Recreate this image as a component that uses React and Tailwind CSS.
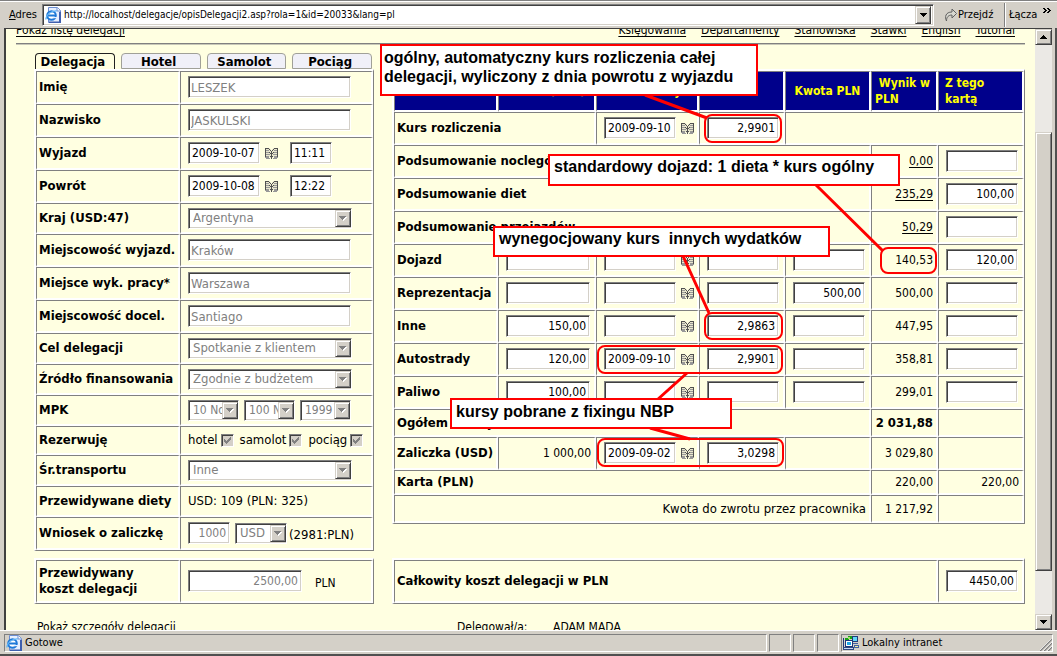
import React from "react";

const UI = "font-['DejaVu_Sans_Condensed','DejaVu_Sans',sans-serif]";
const CELL =
  "border-t border-l border-t-[#808080] border-l-[#808080] border-r-2 border-b-2 border-r-white border-b-white p-0 align-middle";
const TABLE =
  "w-full table-fixed border-separate border-spacing-0 border-t-2 border-l-2 border-t-white border-l-white border-r border-b border-r-[#808080] border-b-[#808080]";
const SUNKEN =
  "rounded-none border border-t-[#808080] border-l-[#808080] border-r-white border-b-white bg-white shadow-[inset_1px_1px_#404040,inset_-1px_-1px_#d4d0c8]";
const RAISED =
  "border border-t-[#d4d0c8] border-l-[#d4d0c8] border-r-[#404040] border-b-[#404040] bg-[#d4d0c8] shadow-[inset_1px_1px_#ffffff,inset_-1px_-1px_#808080]";

function Field({ id, label, value = "", width = "w-[72px]", right, disabled }) {
  const size = disabled && !right ? "px-[2px] text-[13px]" : "px-[3px] text-[12px]";
  return (
    <input
      id={id}
      type="text"
      aria-label={label}
      defaultValue={value}
      disabled={disabled}
      className={`${SUNKEN} ${width} ${size} block h-[22px] shrink-0 ${
        right ? "text-right" : "text-left"
      } ${disabled ? "text-[#808080]" : "text-black"}`}
    />
  );
}

function Pick({ id, label, value, width = "w-[164px]", size = "text-[13px]" }) {
  return (
    <span className={`relative block h-[21px] shrink-0 ${width}`}>
      <select
        id={id}
        aria-label={label}
        disabled
        className={`${SUNKEN} ${size} block h-[21px] w-full appearance-none overflow-hidden pr-[16px] pl-[4px] text-[#808080] opacity-100`}
      >
        <option>{value}</option>
      </select>
      <span
        className={`${RAISED} pointer-events-none absolute top-[2px] right-px flex h-[17px] w-[16px] items-center justify-center`}
      >
        <svg width="8" height="5" viewBox="0 0 8 5" shapeRendering="crispEdges">
          <path d="M1 1h7v1h-1v1h-1v1h-1v1h-1V4h-1z" fill="#fff" />
          <path d="M0 0h7v1H6v1H5v1H4v1H3V3H2V2H1V1H0z" fill="#808080" />
        </svg>
      </span>
    </span>
  );
}

function Book() {
  return (
    <button type="button" aria-label="Kalendarz" className="block h-[13px] w-[13px] shrink-0">
      <svg width="13" height="13" viewBox="0 0 13 13" shapeRendering="crispEdges">
        <path d="M1 1h4v1h1v9H5v-1H1zM12 1H8v1H7v9h1v-1h4z" fill="#e8e6cc" />
        <path
          d="M0 1h1v9H0zM12 1h1v9h-1zM1 1h3v1H1zM9 1h3v1H9zM4 2h1v1H4zM8 2h1v1H8zM5 3h1v1H5zM7 3h1v1H7zM6 4h1v8H6zM4 5h1v1H4zM8 5h1v1H8zM5 6h1v1H5zM7 6h1v1H7zM5 9h1v1H5zM7 9h1v1H7z"
          fill="#505050"
        />
        <path
          d="M1 3h3v1H1zM9 3h3v1H9zM1 5h3v1H1zM9 5h3v1H9zM1 7h4v1H1zM8 7h4v1H8zM1 9h3v1H1zM9 9h3v1H9zM0 10h4v1H0zM9 10h4v1H9zM1 11h4v1H1zM8 11h4v1H8z"
          fill="#989898"
        />
      </svg>
    </button>
  );
}

function Check({ label }) {
  const id = `rez-${label}`;
  return (
    <span className="flex items-center gap-[3px]">
      <label htmlFor={id}>{label}</label>
      <span className="relative block h-[13px] w-[13px]">
        <input
          id={id}
          type="checkbox"
          defaultChecked
          disabled
          className="block h-[13px] w-[13px] appearance-none border border-t-[#808080] border-l-[#808080] border-r-white border-b-white bg-[#d4d0c8] shadow-[inset_1px_1px_#404040]"
        />
        <svg
          className="pointer-events-none absolute top-[3px] left-[3px]"
          width="7"
          height="7"
          viewBox="0 0 7 7"
          shapeRendering="crispEdges"
        >
          <path d="M0 2h1v1h1v1h1V3h1V2h1V1h1V0h1v3H6v1H5v1H4v1H3v1H2V6H1V5H0z" fill="#808080" />
        </svg>
      </span>
    </span>
  );
}

function Row({ label, id, h = "h-[33px]", children }) {
  return (
    <tr className={h}>
      <th scope="row" className={`${CELL} pl-[2px] text-left font-bold`}>
        {id ? <label htmlFor={id}>{label}</label> : label}
      </th>
      <td className={CELL}>
        <div className="flex items-center gap-[5px] pl-[7px]">{children}</div>
      </td>
    </tr>
  );
}

const TABS = ["Delegacja", "Hotel", "Samolot", "Pociąg"];

function Tabs() {
  return (
    <div role="tablist" className="flex h-4 gap-[6px] pr-[2px] pl-px">
      {TABS.map((t, i) => (
        <button
          key={t}
          type="button"
          role="tab"
          aria-selected={i === 0}
          className={`h-4 flex-1 rounded-t-[4px] border-x border-t pr-1 text-[13px] leading-[15px] font-bold ${
            i === 0
              ? "border-[#202020] bg-[#ffffe1]"
              : "border-b border-[#a0a098] bg-[#f0f0f8]"
          }`}
        >
          {t}
        </button>
      ))}
    </div>
  );
}

function TripForm() {
  return (
    <table className={TABLE}>
      <colgroup>
        <col className="w-[144px]" />
        <col />
      </colgroup>
      <tbody>
        <Row label="Imię" id="imie">
          <Field id="imie" value="LESZEK" width="w-[163px]" disabled />
        </Row>
        <Row label="Nazwisko" id="nazwisko">
          <Field id="nazwisko" value="JASKULSKI" width="w-[163px]" disabled />
        </Row>
        <Row label="Wyjazd" id="wyjazd">
          <Field id="wyjazd" value="2009-10-07" />
          <Book />
          <span className="w-[2px]" />
          <Field label="Godzina wyjazdu" value="11:11" width="w-[42px]" />
        </Row>
        <Row label="Powrót" id="powrot">
          <Field id="powrot" value="2009-10-08" />
          <Book />
          <span className="w-[2px]" />
          <Field label="Godzina powrotu" value="12:22" width="w-[42px]" />
        </Row>
        <Row label="Kraj (USD:47)" id="kraj" h="h-[31px]">
          <Pick id="kraj" value="Argentyna" />
        </Row>
        <Row label="Miejscowość wyjazd." id="mwyj">
          <Field id="mwyj" value="Kraków" width="w-[163px]" disabled />
        </Row>
        <Row label="Miejsce wyk. pracy*" id="mprac">
          <Field id="mprac" value="Warszawa" width="w-[163px]" disabled />
        </Row>
        <Row label="Miejscowość docel." id="mdoc">
          <Field id="mdoc" value="Santiago" width="w-[163px]" disabled />
        </Row>
        <Row label="Cel delegacji" id="cel" h="h-[31px]">
          <Pick id="cel" value="Spotkanie z klientem" />
        </Row>
        <Row label="Źródło finansowania" id="zrodlo" h="h-[31px]">
          <Pick id="zrodlo" value="Zgodnie z budżetem" />
        </Row>
        <Row label="MPK" id="mpk" h="h-[31px]">
          <Pick id="mpk" value="10 Nowy" width="w-[51px]" size="text-[12px]" />
          <Pick label="MPK 2" value="100 Nowy" width="w-[51px]" size="text-[12px]" />
          <Pick label="MPK 3" value="1999" width="w-[51px]" size="text-[12px]" />
        </Row>
        <Row label="Rezerwuję" h="h-[29px]">
          <span className="flex gap-[6px]">
            <Check label="hotel" />
            <Check label="samolot" />
            <Check label="pociąg" />
          </span>
        </Row>
        <Row label="Śr.transportu" id="transport" h="h-[31px]">
          <Pick id="transport" value="Inne" />
        </Row>
        <Row label="Przewidywane diety" h="h-[31px]">
          <span>USD: 109 (PLN: 325)</span>
        </Row>
        <Row label="Wniosek o zaliczkę" id="zaliczka">
          <Field id="zaliczka" value="1000" width="w-[42px]" right disabled />
          <Pick label="Waluta zaliczki" value="USD" width="w-[52px]" />
          <span className="-ml-[3px] pt-1">(2981:PLN)</span>
        </Row>
      </tbody>
    </table>
  );
}

function DateCell({ label, value }) {
  return (
    <td className={CELL}>
      <div className="flex items-center gap-[5px] pl-[7px]">
        <Field label={`Data kursu – ${label}`} value={value} />
        <Book />
      </div>
    </td>
  );
}

function NumCell({ label, value, width }) {
  return (
    <td className={`${CELL} pl-[7px]`}>
      <Field label={label} value={value} width={width} right />
    </td>
  );
}

function Value({ children, className = "text-[12px]" }) {
  return <td className={`${CELL} pr-[3px] text-right ${className}`}>{children}</td>;
}

function Name({ children, span }) {
  return (
    <th scope="row" colSpan={span} className={`${CELL} pl-[2px] text-left font-bold`}>
      {children}
    </th>
  );
}

const SUMMARY = [
  ["Podsumowanie noclegów", "0,00", ""],
  ["Podsumowanie diet", "235,29", "100,00"],
  ["Podsumowanie przejazdów", "50,29", ""],
];

const COSTS = [
  { name: "Dojazd", total: "140,53", card: "120,00" },
  { name: "Reprezentacja", pln: "500,00", total: "500,00" },
  { name: "Inne", amount: "150,00", rate: "2,9863", total: "447,95" },
  { name: "Autostrady", amount: "120,00", date: "2009-09-10", rate: "2,9901", total: "358,81" },
  { name: "Paliwo", amount: "100,00", total: "299,01" },
];

const HEAD = `${CELL} bg-[#00008b] text-[#ffff00] text-[12px] font-bold leading-4`;

function Settlement() {
  return (
    <table className={TABLE}>
      <colgroup>
        <col className="w-[104px]" />
        <col className="w-[98px]" />
        <col className="w-[103px]" />
        <col className="w-[86px]" />
        <col className="w-[86px]" />
        <col className="w-[67px]" />
        <col />
      </colgroup>
      <thead>
        <tr className="h-[41px]">
          <th scope="col" className={HEAD}></th>
          <th scope="col" className={HEAD}>Kwota (USD)</th>
          <th scope="col" className={HEAD}>Kurs z daty</th>
          <th scope="col" className={HEAD}>Kurs</th>
          <th scope="col" className={HEAD}>Kwota PLN</th>
          <th scope="col" className={`${HEAD} pl-[3px] text-left`}>&nbsp;Wynik w PLN</th>
          <th scope="col" className={`${HEAD} pr-5 pl-[6px] text-left`}>Z tego kartą</th>
        </tr>
      </thead>
      <tbody>
        <tr className="h-[33px]">
          <Name span={2}>Kurs rozliczenia</Name>
          <DateCell label="rozliczenie" value="2009-09-10" />
          <NumCell label="Kurs rozliczenia" value="2,9901" />
          <td colSpan={3} className={CELL}></td>
        </tr>
        {SUMMARY.map(([name, total, card]) => (
          <tr key={name} className="h-[33px]">
            <Name span={5}>{name}</Name>
            <Value>
              <a href="#" className="underline underline-offset-2">{total}</a>
            </Value>
            <NumCell label={`${name} – kartą`} value={card} />
          </tr>
        ))}
        {COSTS.map((c) => (
          <tr key={c.name} className="h-[33px]">
            <Name>{c.name}</Name>
            <NumCell label={`${c.name} – kwota USD`} value={c.amount} width="w-[84px]" />
            <DateCell label={c.name} value={c.date} />
            <NumCell label={`${c.name} – kurs`} value={c.rate} />
            <NumCell label={`${c.name} – kwota PLN`} value={c.pln} />
            <Value>{c.total}</Value>
            <NumCell label={`${c.name} – kartą`} value={c.card} />
          </tr>
        ))}
        <tr className="h-[28px]">
          <Name span={5}>Ogółem koszty</Name>
          <Value className="font-bold">2 031,88</Value>
          <td className={CELL}></td>
        </tr>
        <tr className="h-[33px]">
          <Name>Zaliczka (USD)</Name>
          <Value>1 000,00</Value>
          <DateCell label="zaliczka" value="2009-09-02" />
          <NumCell label="Zaliczka – kurs" value="3,0298" />
          <td className={CELL}></td>
          <Value>3 029,80</Value>
          <td className={CELL}></td>
        </tr>
        <tr className="h-[25px]">
          <Name span={5}>Karta (PLN)</Name>
          <Value>220,00</Value>
          <Value>220,00</Value>
        </tr>
        <tr className="h-[28px]">
          <td colSpan={5} className={`${CELL} pr-[3px] text-right`}>
            Kwota do zwrotu przez pracownika
          </td>
          <Value>1 217,92</Value>
          <td className={CELL}></td>
        </tr>
      </tbody>
    </table>
  );
}

function IePage() {
  return (
    <svg width="16" height="16" viewBox="0 0 16 16" className="shrink-0">
      <path d="M3.5.5h9l3 3v12h-12z" fill="#e6efff" stroke="#6b8cd0" />
      <path d="M12 .5v3.500h3.500" fill="#fff" stroke="#6b8cd0" />
      <path d="M14 5h2v11H4v-1.500h10z" fill="#3f5fae" />
      <circle cx="6.500" cy="8.500" r="4.300" fill="#fff" stroke="#1d78d8" strokeWidth="2" />
      <path d="M3 8.500h8" stroke="#1d78d8" strokeWidth="2" />
      <path d="M8 10h4v1.200H8z" fill="#e6efff" />
      <path d="M.8 12.500C1 8 6 3.500 12 4" fill="none" stroke="#5fb4f5" strokeWidth="1.200" />
    </svg>
  );
}

function AddressBar() {
  return (
    <header className="flex h-7 shrink-0 items-center border-t border-[#808080] bg-[#d4d0c8] pr-[4px] pl-[9px] text-[11px] shadow-[inset_0_1px_#fff]">
      <label htmlFor="adres" className="w-[33px]">
        <span className="underline">A</span>dres
      </label>
      <div className={`${SUNKEN} flex h-[22px] flex-1 items-center py-[2px] pr-[2px] pl-[2px]`}>
        <IePage />
        <input
          id="adres"
          type="text"
          defaultValue="http://localhost/delegacje/opisDelegacji2.asp?rola=1&id=20033&lang=pl"
          className="h-4 min-w-0 flex-1 bg-transparent pl-[3px] text-[10px] outline-none"
        />
        <button
          type="button"
          aria-label="Pokaż listę adresów"
          className={`${RAISED} flex h-[18px] w-4 items-center justify-center`}
        >
          <svg width="7" height="4" viewBox="0 0 7 4" shapeRendering="crispEdges">
            <path d="M0 0h7v1H6v1H5v1H4v1H3V3H2V2H1V1H0z" fill="#000" />
          </svg>
        </button>
      </div>
      <button type="button" className="ml-[10px] flex w-[60px] items-center gap-px">
        <svg width="13" height="14" viewBox="0 0 13 14" className="shrink-0">
          <path
            d="M2.500 13C.5 9 1.500 4 8 4V1l4.500 4.500L8 10V7C4.500 7 2.500 9 2.500 13z"
            fill="#d8d8d0"
            stroke="#606060"
          />
        </svg>
        Przejdź
      </button>
      <button
        type="button"
        className="h-6 w-[37px] border-l border-[#808080] pl-[4px] text-left shadow-[inset_1px_0_#fff]"
      >
        Łącza
      </button>
      <button type="button" aria-label="Więcej" className="mb-[8px] h-3 w-[12px] pl-[2px]">
        <svg width="8" height="5" viewBox="0 0 8 5" shapeRendering="crispEdges">
          <path
            d="M0 0h2v1h1v1h1v1H3v1H2v1H0V4h1V3h1V2H1V1H0zM4 0h2v1h1v1h1v1H7v1H6v1H4V4h1V3h1V2H5V1H4z"
            fill="#000"
          />
        </svg>
      </button>
    </header>
  );
}

function ScrollBar() {
  return (
    <div className="flex w-[17px] shrink-0 flex-col bg-[#ebe9e5]">
      <button type="button" aria-label="W górę" className={`${RAISED} flex h-4 items-center justify-center`}>
        <svg width="7" height="4" viewBox="0 0 7 4" shapeRendering="crispEdges">
          <path d="M3 0h1v1h1v1h1v1h1v1H0V3h1V2h1V1h1z" fill="#000" />
        </svg>
      </button>
      <div className="grow-[87]" />
      <div className={`${RAISED} grow-[439]`} />
      <div className="grow-[43]" />
      <button type="button" aria-label="W dół" className={`${RAISED} flex h-4 items-center justify-center`}>
        <svg width="7" height="4" viewBox="0 0 7 4" shapeRendering="crispEdges">
          <path d="M0 0h7v1H6v1H5v1H4v1H3V3H2V2H1V1H0z" fill="#000" />
        </svg>
      </button>
    </div>
  );
}

const PANE = "h-[18px] border border-t-[#808080] border-l-[#808080] border-r-white border-b-white";

function StatusBar() {
  return (
    <footer className="flex h-[26px] shrink-0 gap-[2px] border-t border-b-2 border-t-white border-b-[#505050] bg-[#d4d0c8] pt-[3px] pr-[4px] pl-[4px] text-[11px]">
      <div className={`${PANE} flex flex-1 items-center gap-[3px] pl-px`}>
        <IePage />
        Gotowe
      </div>
      <div className={`${PANE} w-[22px]`} />
      <div className={`${PANE} w-[22px]`} />
      <div className={`${PANE} w-[22px]`} />
      <div className={`${PANE} flex w-[212px] items-center gap-[3px] pl-px`}>
        <svg width="16" height="16" viewBox="0 0 16 16" shapeRendering="crispEdges">
          <path d="M2 3h3V1h4v3H6v2H2z" fill="#18a018" />
          <path d="M5 2h2v2H5z" fill="#a0e060" />
          <path d="M9 1h6v6H9z" fill="#203878" />
          <path d="M10 2h4v4h-4z" fill="#60d8f8" />
          <path d="M2 5h8v7H2z" fill="#203878" />
          <path d="M3 6h6v5H3z" fill="#fff" />
          <path d="M4 7h4v3H4z" fill="#20a8e8" />
          <path d="M0 12h11v3H0z" fill="#304880" />
          <path d="M1 13h9v1H1z" fill="#c8d8f0" />
          <path d="M10 8h5v1h-5zM11 10h5v3h-5z" fill="#4060a0" />
          <path d="M12 11h3v1h-3z" fill="#f0f0a0" />
          <path d="M0 3h1v9H0z" fill="#203878" />
        </svg>
        <span className="flex-1">Lokalny intranet</span>
        <svg width="12" height="12" viewBox="0 0 12 12" className="mt-1">
          <path d="M0 12L12 0M4 12l8-8M8 12l4-4" stroke="#808080" strokeWidth="1.500" />
          <path d="M-1 12L12-1M3 12l9-9M7 12l5-5" stroke="#fff" strokeWidth=".7" />
        </svg>
      </div>
    </footer>
  );
}

const NOTE =
  "absolute border-[2px] border-[#ff0000] bg-white font-['Liberation_Sans',Arial,sans-serif] text-[16px] leading-[19px] font-bold whitespace-pre";

function Notes() {
  return (
    <div className="pointer-events-none absolute top-0 left-0">
      <svg
        width="1057"
        height="656"
        viewBox="0 0 1057 656"
        className="block max-w-none"
        fill="none"
        stroke="#ff0000"
        strokeWidth="2"
      >
        <rect x="705" y="115" width="76" height="27" rx="7" />
        <rect x="881" y="248" width="55" height="25" rx="7" />
        <rect x="705" y="313" width="77" height="26" rx="7" />
        <rect x="598" y="346" width="184" height="27" rx="7" />
        <rect x="598" y="439" width="185" height="27" rx="7" />
        <path
          d="M645 95l62 23M816 185l67 66M683 256l26 57M687 373l-30 27M650 428l40 11"
          strokeWidth="3"
        />
      </svg>
      <p className={`${NOTE} top-[44px] left-[380px] h-[52px] w-[378px] pt-[2px] pl-[2px]`}>
        {"ogólny, automatyczny kurs rozliczenia całej\ndelegacji, wyliczony z dnia powrotu z wyjazdu"}
      </p>
      <p className={`${NOTE} top-[154px] left-[548px] h-[32px] w-[352px] pt-px pl-[4px]`}>
        {"standardowy dojazd: 1 dieta * kurs ogólny"}
      </p>
      <p className={`${NOTE} top-[226px] left-[493px] h-[31px] w-[337px] pt-px pl-[4px]`}>
        {"wynegocjowany kurs  innych wydatków"}
      </p>
      <p className={`${NOTE} top-[398px] left-[450px] h-[31px] w-[282px] pt-[2px] pl-[4px]`}>
        {"kursy pobrane z fixingu NBP"}
      </p>
    </div>
  );
}

const LINKS = ["Księgowania", "Departamenty", "Stanowiska", "Stawki", "English", "Tutorial"];

export default function App() {
  return (
    <div className={`${UI} relative flex h-screen flex-col overflow-hidden bg-[#d4d0c8] text-[12px] leading-4 text-black`}>
      <AddressBar />
      <div className="flex min-h-0 flex-1 border-r-[2px] border-[#505050] bg-[#d4d0c8] pr-[3px] pl-[4px]">
        <div className="flex min-h-0 flex-1 border-t border-l-2 border-t-[#404040] border-l-[#404040]">
          <main className="min-w-0 flex-1 overflow-hidden bg-[#ffffe1] pr-[10px] pl-[10px]">
            <nav className="flex h-[15px] items-end justify-between overflow-hidden border-b border-[#808080] pr-[10px] pb-[5px]">
              <a href="#" className="underline underline-offset-2">Pokaż listę delegacji</a>
              <span className="flex gap-[15px]">
                {LINKS.map((l) => (
                  <a key={l} href="#" className="underline underline-offset-2">{l}</a>
                ))}
              </span>
            </nav>
            <div className="border-t border-[#c8c8b8] pt-[8px] pl-[18px]">
              <div className="flex gap-[18px] text-[13px]">
                <section className="w-[340px] shrink-0">
                  <Tabs />
                  <TripForm />
                  <div className="h-[7px]" />
                  <table className={TABLE}>
                    <colgroup>
                      <col className="w-[144px]" />
                      <col />
                    </colgroup>
                    <tbody>
                      <Row
                        h="h-[43px]"
                        id="koszt"
                        label={
                          <>
                            Przewidywany
                            <br />
                            koszt delegacji
                          </>
                        }
                      >
                        <Field id="koszt" value="2500,00" width="w-[114px]" right disabled />
                        <span className="pt-1 pl-2 text-[12px]">PLN</span>
                      </Row>
                    </tbody>
                  </table>
                </section>
                <section className="flex min-w-0 flex-1 flex-col justify-between pt-4">
                  <Settlement />
                  <table className={TABLE}>
                    <colgroup>
                      <col />
                      <col className="w-[86px]" />
                    </colgroup>
                    <tbody>
                      <tr className="h-[43px]">
                        <Name>Całkowity koszt delegacji w PLN</Name>
                        <NumCell label="Całkowity koszt delegacji w PLN" value="4450,00" />
                      </tr>
                    </tbody>
                  </table>
                </section>
              </div>
              <div className="flex pt-[15px] pl-[3px]">
                <span className="w-[420px]">Pokaż szczegóły delegacji</span>
                <span className="w-24">Delegował/a:</span>
                <span>ADAM MADA</span>
              </div>
            </div>
          </main>
          <ScrollBar />
        </div>
      </div>
      <StatusBar />
      <Notes />
    </div>
  );
}
